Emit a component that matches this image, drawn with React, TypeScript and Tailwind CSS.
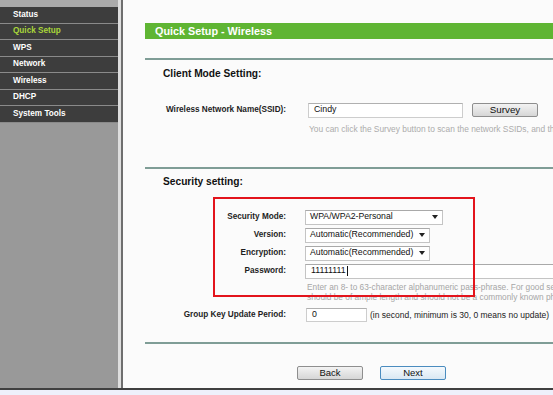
const menu = ['Status', 'Quick Setup', 'WPS', 'Network', 'Wireless', 'DHCP', 'System Tools']

function Row({ label, children, className = '' }: { label: string; children: React.ReactNode; className?: string }) {
  return (
    <div className={`flex h-[18px] items-center ${className}`}>
      <div className="w-[141px] shrink-0 whitespace-nowrap text-right text-[8.2px] font-bold text-[#1e1e1e]">{label}</div>
      <div className="ml-[19px] flex items-center whitespace-nowrap">{children}</div>
    </div>
  )
}

function Select({ value, width }: { value: string; width: string }) {
  return (
    <div className={`flex h-[15px] items-center justify-between border border-[#c4c4c4] border-t-[#a9a9a9] bg-white pl-[4px] pr-[4px] text-[8.7px] text-[#111] ${width}`}>
      <span>{value}</span>
      <svg width="6" height="4" viewBox="0 0 6 4">
        <path d="M0 0h6L3 4z" fill="#222" />
      </svg>
    </div>
  )
}

function Button({ label, focused = false }: { label: string; focused?: boolean }) {
  return (
    <div
      className={`flex h-[14px] w-[66px] items-center justify-center rounded-[2px] border text-[9.5px] text-[#111] ${
        focused
          ? 'border-[#4a8cbf] bg-gradient-to-b from-[#f4f9fd] to-[#d9e8f3]'
          : 'border-[#8e8e8e] bg-gradient-to-b from-[#f3f3f3] to-[#d6d6d6]'
      }`}
    >
      {label}
    </div>
  )
}

export default function App() {
  return (
    <div className="relative h-[395px] w-[553px] overflow-hidden bg-[#eef0fb] font-['Liberation_Sans',Arial,sans-serif]">
      <div className="flex h-[388px]">
        {/* sidebar */}
        <div className="flex w-[118px] shrink-0 flex-col bg-[#999999]">
          <div className="h-[7px] bg-[#aaaaaa]" />
          {menu.map((m) => (
            <div
              key={m}
              className={`box-border flex h-[16.5px] items-center border-b border-[#8a8a8a] bg-[#3d3d3d] pl-[13px] text-[8.2px] font-bold ${
                m === 'Quick Setup' ? 'text-[#a9d63a]' : 'text-white'
              }`}
            >
              {m}
            </div>
          ))}
        </div>
        <div className="w-[3px] shrink-0 bg-[#dedede]" />
        <div className="w-[2px] shrink-0 bg-[#6e6e6e]" />

        {/* content */}
        <div className="min-w-0 flex-1 overflow-hidden bg-[#fbfbfb] pl-[22px] pt-[23px]">
          <div className="flex h-[16px] w-[420px] items-center bg-[#5fb533] pl-[10px] text-[10.8px] font-bold text-white">
            Quick Setup - Wireless
          </div>
          <div className="mt-[19px] h-[2px] w-[420px] bg-[#7f9d96]" />

          <div className="mt-[8px] pl-[18px] text-[10.2px] font-bold leading-[12px] text-[#111]">Client Mode Setting:</div>

          <Row label="Wireless Network Name(SSID):" className="mt-[21px]">
            <div className="ml-[3px] flex h-[15px] w-[155px] items-center border border-[#cdcdcd] border-t-[#b0b0b0] bg-white pl-[5px] text-[8.8px] text-[#111]">
              Cindy
            </div>
            <div className="ml-[9px] flex h-[14px] w-[66px] items-center justify-center rounded-[2px] border border-[#8e8e8e] bg-gradient-to-b from-[#f3f3f3] to-[#d6d6d6] text-[9.8px] text-[#111]">
              Survey
            </div>
          </Row>
          <div className="ml-[164px] mt-[4.5px] whitespace-nowrap text-[8.4px] leading-[11px] text-[#acacac]">
            You can click the Survey button to scan the network SSIDs, and then select one.
          </div>

          <div className="mt-[32.5px] h-[2px] w-[420px] bg-[#7f9d96]" />
          <div className="mt-[7px] pl-[18px] text-[10.2px] font-bold leading-[12px] text-[#111]">Security setting:</div>

          <div className="mt-[20px]">
            <Row label="Security Mode:">
              <Select value="WPA/WPA2-Personal" width="w-[138px]" />
            </Row>
            <Row label="Version:">
              <Select value="Automatic(Recommended)" width="w-[125px]" />
            </Row>
            <Row label="Encryption:">
              <Select value="Automatic(Recommended)" width="w-[125px]" />
            </Row>
            <Row label="Password:">
              <div className="flex h-[15px] w-[300px] items-center border border-[#c4c4c4] border-t-[#a9a9a9] bg-white pl-[5px] text-[8.8px] text-[#111]">
                11111111
                <span className="ml-[1px] inline-block h-[10px] w-[1px] bg-[#111]" />
              </div>
            </Row>
          </div>
          <div className="ml-[162px] mt-[3px] whitespace-nowrap text-[8.3px] leading-[9.5px] text-[#a6a6a6]">
            <div>Enter an 8- to 63-character alphanumeric pass-phrase. For good security, it</div>
            <div>should be of ample length and should not be a commonly known phrase.</div>
          </div>

          <Row label="Group Key Update Period:" className="mt-[4px]">
            <div className="ml-[1px] flex h-[14px] w-[61px] items-center border border-[#cdcdcd] border-t-[#b0b0b0] bg-white pl-[5px] text-[8.8px] text-[#111]">
              0
            </div>
            <span className="ml-[3px] text-[8.5px] text-[#222]">(in second, minimum is 30, 0 means no update)</span>
          </Row>

          <div className="mt-[18px] h-[2px] w-[420px] bg-[#7f9d96]" />

          <div className="ml-[152px] mt-[22px] flex gap-[17px]">
            <Button label="Back" />
            <Button label="Next" focused />
          </div>
        </div>
      </div>
      <div className="h-[1.5px] bg-[#404040]" />

      {/* annotation box */}
      <div className="absolute left-[213px] top-[197px] h-[100px] w-[262px] border-2 border-[#e3141c]" />
    </div>
  )
}
